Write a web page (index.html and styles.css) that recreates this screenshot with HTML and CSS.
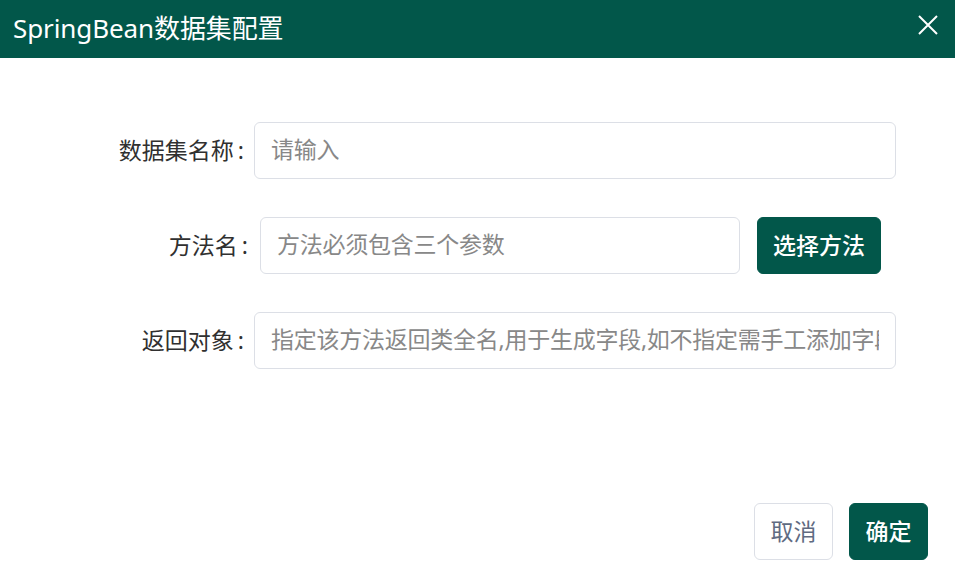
FILE: index.html
```html
<!DOCTYPE html>
<html lang="zh-CN">
<head>
<meta charset="utf-8">
<title>SpringBean数据集配置</title>
<link rel="stylesheet" href="styles.css">
</head>
<body>
<div class="dialog">
  <header class="dialog-header">
    <h1 class="dialog-title">SpringBean数据集配置</h1>
    <button class="close-btn" aria-label="关闭">
      <svg width="20" height="20" viewBox="0 0 20 20"><path d="M1 1 L19 19 M19 1 L1 19" stroke="#ffffff" stroke-width="2" fill="none"/></svg>
    </button>
  </header>
  <main class="dialog-body">
    <div class="form-row">
      <label class="form-label">数据集名称<span class="colon">:</span></label>
      <input class="form-input input-wide" type="text" placeholder="请输入">
    </div>
    <div class="form-row row-method">
      <label class="form-label">方法名<span class="colon">:</span></label>
      <input class="form-input input-method" type="text" placeholder="方法必须包含三个参数">
      <button class="btn btn-primary btn-select">选择方法</button>
    </div>
    <div class="form-row">
      <label class="form-label">返回对象<span class="colon">:</span></label>
      <input class="form-input input-wide" type="text" placeholder="指定该方法返回类全名,用于生成字段,如不指定需手工添加字段">
    </div>
  </main>
  <footer class="dialog-footer">
    <button class="btn btn-default">取消</button>
    <button class="btn btn-primary">确定</button>
  </footer>
</div>
</body>
</html>
```

FILE: styles.css
```css
* { box-sizing: border-box; }
html, body { margin: 0; padding: 0; background: #ffffff; }
body {
  font-family: "Noto Sans", "Noto Sans CJK SC", sans-serif;
  width: 955px;
  height: 588px;
  overflow: hidden;
}
.dialog { display: flex; flex-direction: column; height: 588px; }
.dialog-header {
  height: 58px;
  background: #02574a;
  display: flex;
  align-items: center;
  justify-content: space-between;
  padding: 0 17px 0 13px;
}
.dialog-title {
  margin: 0 0 2px 0;
  font-size: 26px;
  font-weight: 400;
  color: #ffffff;
  line-height: 1;
  letter-spacing: -0.1px;
}
.close-btn {
  background: none;
  border: 0;
  padding: 0;
  width: 20px;
  height: 20px;
  margin-top: -8px;
  cursor: pointer;
}
.close-btn svg { display: block; }
.dialog-body {
  padding-top: 64px;
  display: flex;
  flex-direction: column;
  gap: 38px;
  flex: 1;
}
.form-row { display: flex; align-items: center; height: 57px; }
.form-label {
  width: 244px;
  text-align: right;
  font-size: 23px;
  color: #303030;
  margin-right: 10px;
  margin-bottom: 4px;
  flex-shrink: 0;
}
.colon { margin-left: 4px; }
.row-method .form-label { width: 248px; margin-right: 12px; }
.form-input {
  height: 57px;
  border: 1px solid #dcdfe6;
  border-radius: 6px;
  padding: 0 16px 3px 16px;
  font-family: inherit;
  font-size: 23px;
  color: #333;
  outline: none;
  background: #fff;
}
.form-input::placeholder { color: #888888; letter-spacing: -0.25px; }
.input-wide { width: 642px; }
.input-method { width: 480px; }
.btn {
  height: 57px;
  border-radius: 6px;
  font-family: inherit;
  font-size: 23px;
  padding: 0 17px 3px 17px;
  cursor: pointer;
}
.btn-primary {
  background: #02574a;
  border: 1px solid #02574a;
  color: #ffffff;
  font-weight: 500;
}
.btn-default {
  background: #ffffff;
  border: 1px solid #dcdfe6;
  color: #5f6b82;
}
.btn-select { margin-left: 17px; width: 124px; padding: 0 0 3px 0; }
.dialog-footer {
  display: flex;
  justify-content: flex-end;
  gap: 16px;
  padding: 0 27px 28px 0;
}
.dialog-footer .btn { width: 79px; padding: 0 0 3px 0; }
```
